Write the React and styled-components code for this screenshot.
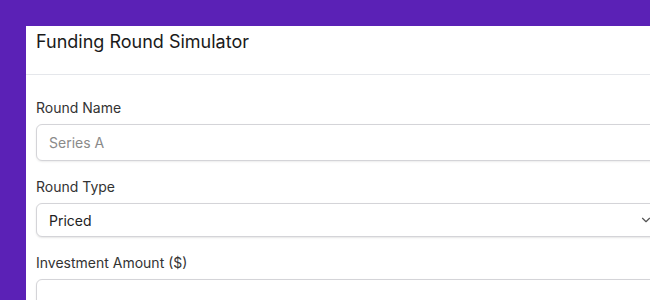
import React from 'react'
import styled, { createGlobalStyle } from 'styled-components'
import { ChevronDown } from 'lucide-react'

const GlobalStyle = createGlobalStyle`
  html, body {
    margin: 0;
    padding: 0;
    overflow: hidden;
    background: #5b21b6;
    font-family: Inter, "Noto Sans", sans-serif;
  }
`

const Page = styled.div`
  padding: 26px 0 0 26px;
  height: 300px;
  box-sizing: border-box;
  overflow: hidden;
`

const Card = styled.div`
  width: 646px;
  background: #ffffff;
  min-height: 100%;
`

const Header = styled.div`
  padding: 5px 10px 21px;
  border-bottom: 1px solid #e5e7eb;
`

const Title = styled.h2`
  margin: 0;
  font-size: 18px;
  font-weight: 400;
  color: #1a1a1a;
  line-height: 22px;
`

const Body = styled.div`
  padding: 23px 10px 0;
`

const Field = styled.div`
  display: flex;
  flex-direction: column;
  margin-bottom: 16px;
`

const Label = styled.label`
  font-size: 14px;
  line-height: 20px;
  color: #333333;
  margin-bottom: 6px;
`

const Input = styled.input`
  box-sizing: border-box;
  height: 37px;
  padding: 0 12px;
  font-family: inherit;
  font-size: 14px;
  color: #222;
  border: 1px solid #d4d4d8;
  border-radius: 6px;
  box-shadow: 0 1px 2px rgba(0, 0, 0, 0.08);
  outline: none;

  &::placeholder {
    color: #8a8a8a;
  }
`

const SelectWrap = styled.div`
  position: relative;
`

const Select = styled.select`
  box-sizing: border-box;
  width: 100%;
  height: 34px;
  padding: 0 12px;
  font-family: inherit;
  font-size: 14px;
  color: #222;
  background: #fff;
  border: 1px solid #d4d4d8;
  border-radius: 6px;
  box-shadow: 0 1px 2px rgba(0, 0, 0, 0.1);
  appearance: none;
  outline: none;
`

const Chevron = styled(ChevronDown)`
  position: absolute;
  right: 9px;
  top: 10px;
  color: #555;
  pointer-events: none;
`

export default function App() {
  return (
    <>
      <GlobalStyle />
      <Page>
        <Card>
          <Header>
            <Title>Funding Round Simulator</Title>
          </Header>
          <Body>
            <Field>
              <Label>Round Name</Label>
              <Input placeholder="Series A" />
            </Field>
            <Field>
              <Label>Round Type</Label>
              <SelectWrap>
                <Select defaultValue="priced">
                  <option value="priced">Priced</option>
                  <option value="safe">SAFE</option>
                  <option value="note">Convertible Note</option>
                </Select>
                <Chevron size={14} strokeWidth={2} />
              </SelectWrap>
            </Field>
            <Field>
              <Label>Investment Amount ($)</Label>
              <Input />
            </Field>
          </Body>
        </Card>
      </Page>
    </>
  )
}
